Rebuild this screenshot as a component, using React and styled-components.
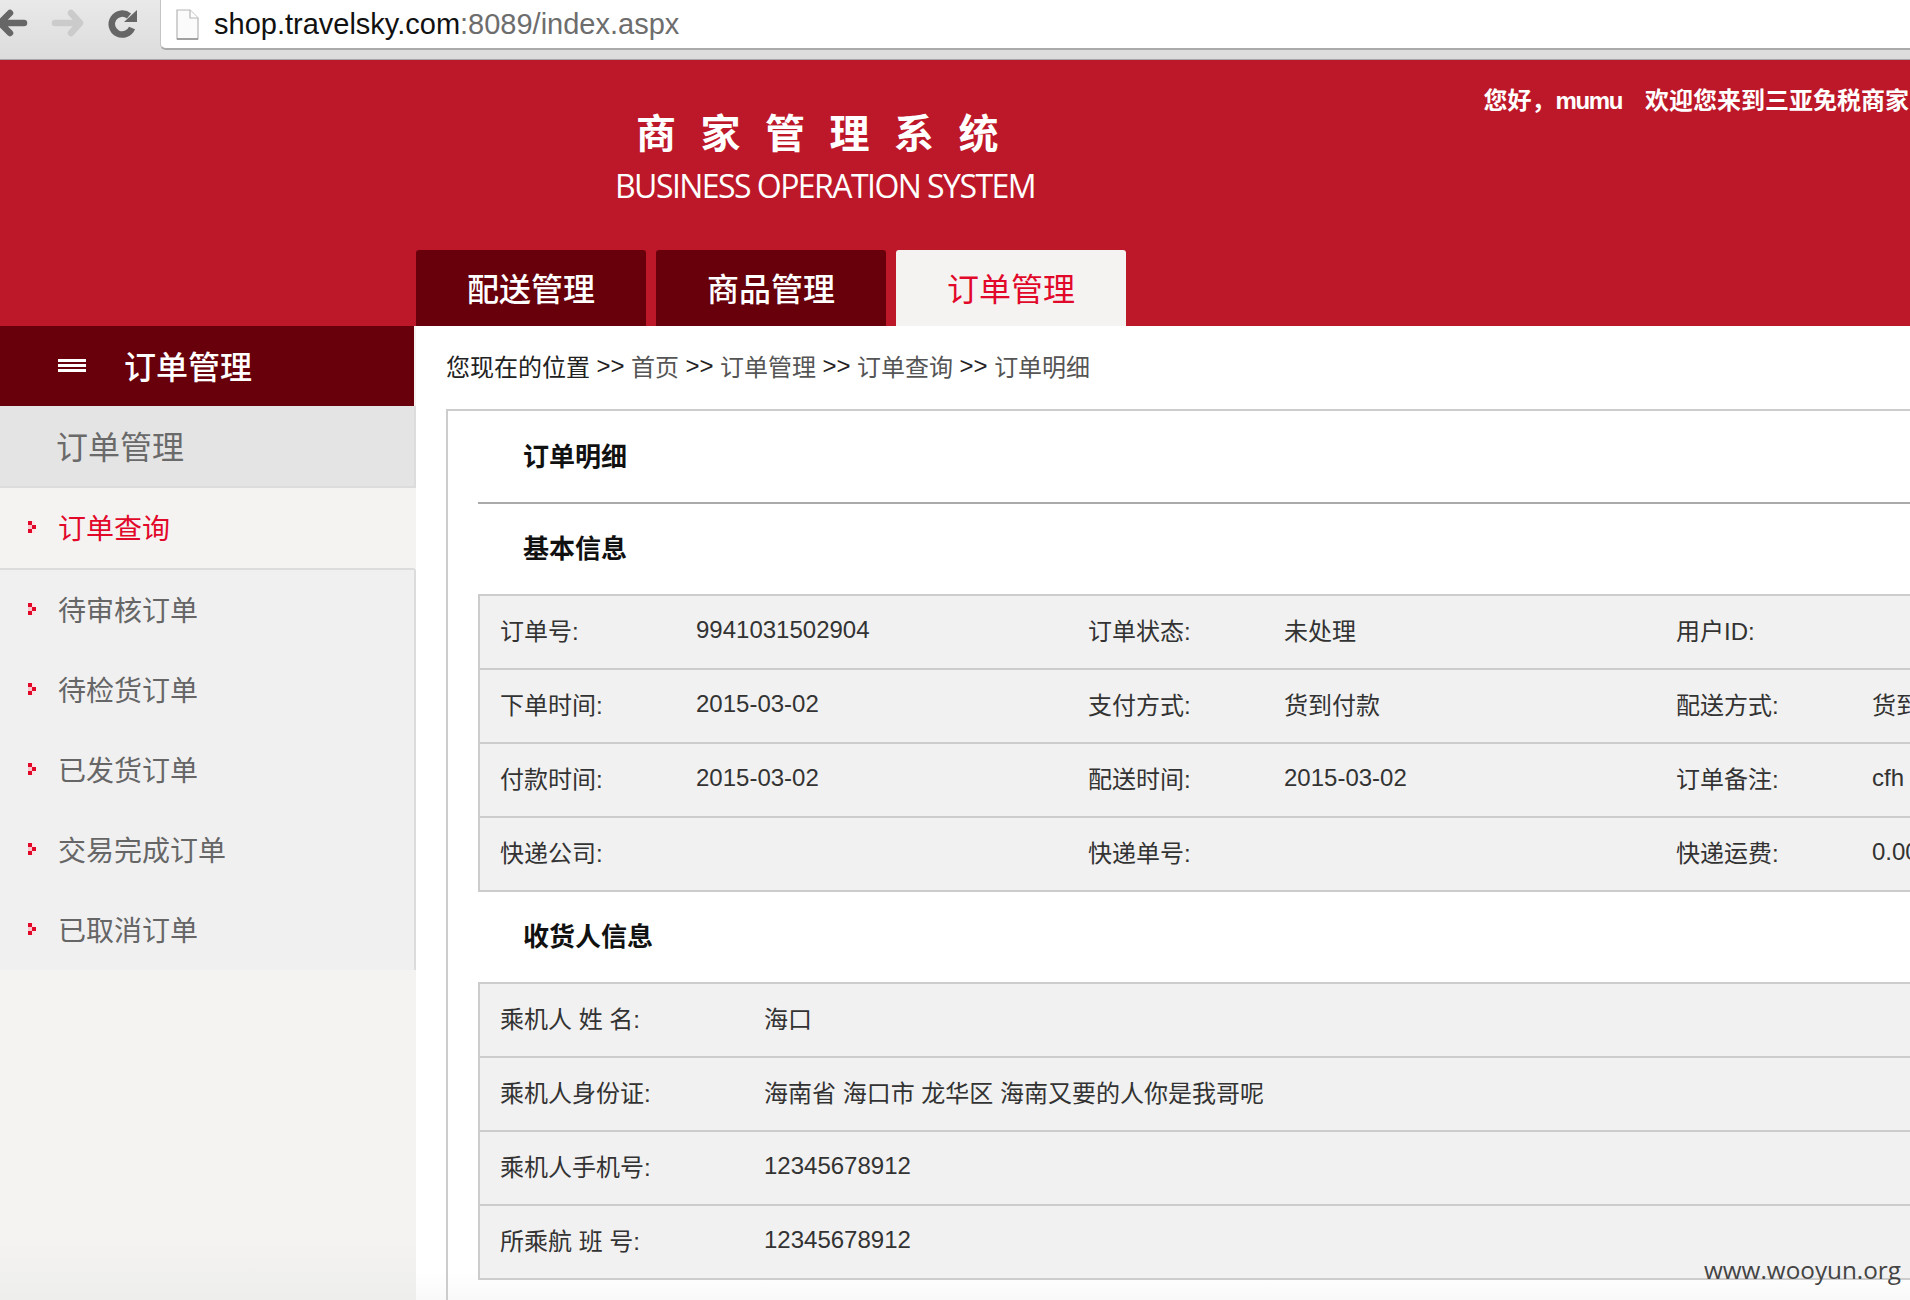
import React from "react";
import styled, { createGlobalStyle } from "styled-components";

const GlobalStyle = createGlobalStyle`
  html, body {
    margin: 0;
    padding: 0;
    width: 1910px;
    height: 1300px;
    overflow: hidden;
    background: #fff;
    font-family: "Liberation Sans", "Noto Sans CJK SC", sans-serif;
  }
`;

const Page = styled.div`
  position: relative;
  width: 1910px;
  height: 1300px;
  overflow: hidden;
  display: flex;
  flex-direction: column;
`;

const BrowserBar = styled.div`
  height: 59px;
  flex: none;
  display: flex;
  align-items: flex-start;
  background: linear-gradient(#e9e9e9, #dcdcdc);
  border-bottom: 1px solid #a6a6a6;
`;

const NavButtons = styled.div`
  width: 160px;
  height: 49px;
  flex: none;
  overflow: hidden;
`;

const AddressBar = styled.div`
  flex: 1;
  height: 48px;
  display: flex;
  align-items: center;
  gap: 15px;
  padding-left: 15px;
  background: #fff;
  border-left: 1px solid #c4c4c4;
  border-bottom: 2px solid #aaa;
  border-bottom-left-radius: 6px;
  font-size: 29px;
  color: #6d6d6d;
`;

const Host = styled.span`
  color: #111;
`;

const Header = styled.div`
  height: 266px;
  flex: none;
  display: flex;
  flex-direction: column;
  background: #bd1829;
`;

const HeaderTop = styled.div`
  flex: 1;
  display: flex;
  justify-content: space-between;
  padding-left: 615px;
`;

const Brand = styled.div`
  width: 417px;
  padding-top: 51px;
  color: #fff;
`;

const BrandName = styled.div`
  font-size: 40px;
  line-height: 46px;
  font-weight: bold;
  letter-spacing: 24.5px;
  padding-left: 21px;
  white-space: nowrap;
`;

const BrandSub = styled.div`
  margin-top: 11px;
  font-family: "Open Sans", sans-serif;
  font-size: 32px;
  line-height: 36px;
  letter-spacing: -1.55px;
  white-space: nowrap;
`;

const Greeting = styled.div`
  display: flex;
  gap: 23px;
  padding: 24px 1px 0 0;
  font-size: 24px;
  line-height: 34px;
  font-weight: bold;
  color: #fff;
  white-space: nowrap;
`;

const UserName = styled.span`
  letter-spacing: -1.4px;
`;

const Tabs = styled.div`
  display: flex;
  gap: 10px;
  padding-left: 416px;
`;

const Tab = styled.div`
  width: 230px;
  height: 74px;
  padding-bottom: 2px;
  display: flex;
  align-items: center;
  justify-content: center;
  border-radius: 3px 3px 0 0;
  font-size: 32px;
  font-weight: ${(p) => (p.$active ? "400" : "500")};
  background: ${(p) => (p.$active ? "#f4f3f2" : "#67000b")};
  color: ${(p) => (p.$active ? "#e2082a" : "#fff")};
`;

const Body = styled.div`
  flex: 1;
  display: flex;
  min-height: 0;
`;

const Sidebar = styled.div`
  width: 416px;
  flex: none;
  background: linear-gradient(#f4f3f1 94%, #eeeeed);
`;

const SideHeader = styled.div`
  width: 414px;
  height: 80px;
  display: flex;
  align-items: center;
  gap: 38px;
  padding: 0 0 2px 58px;
  box-sizing: border-box;
  background: #67000b;
  color: #fff;
  font-size: 32px;
  font-weight: 500;
`;

const MenuIcon = styled.div`
  width: 28px;
  height: 13px;
  border-top: 3px solid #fff;
  border-bottom: 3px solid #fff;
  box-sizing: border-box;

  &::after {
    content: "";
    display: block;
    height: 3px;
    margin-top: 2px;
    background: #fff;
  }
`;

const SideGroup = styled.div`
  height: 82px;
  box-sizing: border-box;
  display: flex;
  align-items: center;
  padding: 0 0 2px 56px;
  background: #e4e4e4;
  border-right: 2px solid #dcdcdc;
  border-bottom: 2px solid #dcdcdc;
  font-size: 32px;
  color: #6a6a6a;
`;

const SideList = styled.div`
  background: #f0f0f1;
`;

const SideItem = styled.div`
  height: ${(p) => (p.$active ? "82px" : "80px")};
  box-sizing: border-box;
  display: flex;
  align-items: center;
  gap: 22px;
  padding: 0 0 2px 28px;
  font-size: 28px;
  color: ${(p) => (p.$active ? "#e2082a" : "#666")};
  background: ${(p) => (p.$active ? "#f4f3f2" : "transparent")};
  border-right: 2px solid ${(p) => (p.$active ? "#f4f3f2" : "#dcdcdc")};
  border-bottom: ${(p) => (p.$active ? "2px solid #dcdcdc" : "none")};
`;

const Main = styled.div`
  flex: 1;
  min-width: 0;
  padding-left: 30px;
  background: linear-gradient(#fff 97%, #f9f9f9);
`;

const Crumbs = styled.div`
  height: 79px;
  padding-bottom: 4px;
  display: flex;
  align-items: center;
  gap: 6.5px;
  font-size: 24px;
  color: #555;
  white-space: nowrap;
`;

const CrumbLead = styled.span`
  color: #222;
`;

const CrumbSep = styled.span`
  color: #222;
`;

const Panel = styled.div`
  width: 1700px;
  height: 900px;
  padding: 0 30px;
  box-sizing: border-box;
  border-left: 2px solid #ccc;
  border-top: 2px solid #ccc;
`;

const PanelTitle = styled.div`
  height: 87px;
  display: flex;
  align-items: center;
  padding: 0 0 4px 45px;
  border-bottom: 2px solid #aaa;
  font-size: 26px;
  font-weight: bold;
  color: #111;
`;

const SectionTitle = styled.div`
  height: 85px;
  display: flex;
  align-items: center;
  padding: 0 0 5px 45px;
  font-size: 26px;
  font-weight: bold;
  color: #111;
`;

const InfoTable = styled.div`
  background: #f1f1f1;
  border: 2px solid #ccc;
  border-right: none;
`;

const InfoRow = styled.div`
  height: 67px;
  display: grid;
  grid-template-columns: ${(p) => (p.$wide ? "264px 1fr" : "196px 392px 196px 392px 196px 1fr")};
  align-items: center;
  padding: 0 0 5px 20px;
  font-size: 24px;
  color: #333;
  white-space: nowrap;

  & + & {
    border-top: 2px solid #ccc;
  }
`;

const Watermark = styled.div`
  position: absolute;
  right: 9px;
  bottom: 14px;
  font-family: "Open Sans", sans-serif;
  font-size: 24.3px;
  line-height: 32px;
  color: #444;
`;

function BrowserIcons() {
  return (
    <svg width="160" height="49" viewBox="0 0 160 49">
      <g fill="none" strokeWidth="6.5" strokeLinecap="round" strokeLinejoin="round">
        <path d="M24 23 H2 M10 13 L0 23 L10 33" stroke="#666" />
        <path d="M55 23 H78 M71 13 L80 23 L71 33" stroke="#cbcbcb" />
        <path d="M132 28 A10.5 10.5 0 1 1 129 16" stroke="#666" strokeLinecap="butt" />
      </g>
      <path d="M137 10 V22 H124 Z" fill="#666" />
    </svg>
  );
}

function PageIcon() {
  return (
    <svg width="23" height="31" viewBox="0 0 23 31">
      <path d="M1 1 H14 L22 9 V30 H1 Z" fill="#fbfbfb" stroke="#b5b5b5" strokeWidth="1.2" />
      <path d="M14 1 V9 H22" fill="#fff" stroke="#b5b5b5" strokeWidth="1.2" />
      <path d="M1 30 H22" stroke="#8f8f8f" strokeWidth="1.5" />
    </svg>
  );
}

function Bullet() {
  return (
    <svg width="8" height="12" viewBox="0 0 8 12" shapeRendering="crispEdges">
      <rect x="0" y="0" width="4" height="4" fill="#e2082a" />
      <rect x="4" y="4" width="4" height="4" fill="#e2082a" />
      <rect x="0" y="8" width="4" height="4" fill="#e2082a" />
      <rect x="0" y="4" width="4" height="4" fill="#f7c9cf" />
      <rect x="4" y="0" width="3" height="4" fill="#fbe3e6" />
      <rect x="4" y="8" width="3" height="4" fill="#fbe3e6" />
    </svg>
  );
}

const menu = ["待审核订单", "待检货订单", "已发货订单", "交易完成订单", "已取消订单"];

const basicRows = [
  ["订单号:", "9941031502904", "订单状态:", "未处理", "用户ID:", ""],
  ["下单时间:", "2015-03-02", "支付方式:", "货到付款", "配送方式:", "货到付款"],
  ["付款时间:", "2015-03-02", "配送时间:", "2015-03-02", "订单备注:", "cfh"],
  ["快递公司:", "", "快递单号:", "", "快递运费:", "0.00"],
];

const receiverRows = [
  ["乘机人 姓 名:", "海口"],
  ["乘机人身份证:", "海南省 海口市 龙华区 海南又要的人你是我哥呢"],
  ["乘机人手机号:", "12345678912"],
  ["所乘航 班 号:", "12345678912"],
];

const App = () => {
  return (
    <Page>
      <GlobalStyle />
      <BrowserBar>
        <NavButtons>
          <BrowserIcons />
        </NavButtons>
        <AddressBar>
          <PageIcon />
          <span>
            <Host>shop.travelsky.com</Host>:8089/index.aspx
          </span>
        </AddressBar>
      </BrowserBar>
      <Header>
        <HeaderTop>
          <Brand>
            <BrandName>商家管理系统</BrandName>
            <BrandSub>BUSINESS OPERATION SYSTEM</BrandSub>
          </Brand>
          <Greeting>
            <span>
              您好，<UserName>mumu</UserName>
            </span>
            <span>欢迎您来到三亚免税商家</span>
          </Greeting>
        </HeaderTop>
        <Tabs>
          <Tab>配送管理</Tab>
          <Tab>商品管理</Tab>
          <Tab $active>订单管理</Tab>
        </Tabs>
      </Header>
      <Body>
        <Sidebar>
          <SideHeader>
            <MenuIcon />
            订单管理
          </SideHeader>
          <SideGroup>订单管理</SideGroup>
          <SideList>
            <SideItem $active>
              <Bullet />
              订单查询
            </SideItem>
            {menu.map((m) => (
              <SideItem key={m}>
                <Bullet />
                {m}
              </SideItem>
            ))}
          </SideList>
        </Sidebar>
        <Main>
          <Crumbs>
            <CrumbLead>您现在的位置</CrumbLead>
            <CrumbSep>&gt;&gt;</CrumbSep>
            <span>首页</span>
            <CrumbSep>&gt;&gt;</CrumbSep>
            <span>订单管理</span>
            <CrumbSep>&gt;&gt;</CrumbSep>
            <span>订单查询</span>
            <CrumbSep>&gt;&gt;</CrumbSep>
            <span>订单明细</span>
          </Crumbs>
          <Panel>
            <PanelTitle>订单明细</PanelTitle>
            <SectionTitle>基本信息</SectionTitle>
            <InfoTable>
              {basicRows.map((r) => (
                <InfoRow key={r[0]}>
                  {r.map((c, i) => (
                    <span key={i}>{c}</span>
                  ))}
                </InfoRow>
              ))}
            </InfoTable>
            <SectionTitle>收货人信息</SectionTitle>
            <InfoTable>
              {receiverRows.map((r) => (
                <InfoRow key={r[0]} $wide>
                  {r.map((c, i) => (
                    <span key={i}>{c}</span>
                  ))}
                </InfoRow>
              ))}
            </InfoTable>
          </Panel>
        </Main>
      </Body>
      <Watermark>www.wooyun.org</Watermark>
    </Page>
  );
};

export default App;
